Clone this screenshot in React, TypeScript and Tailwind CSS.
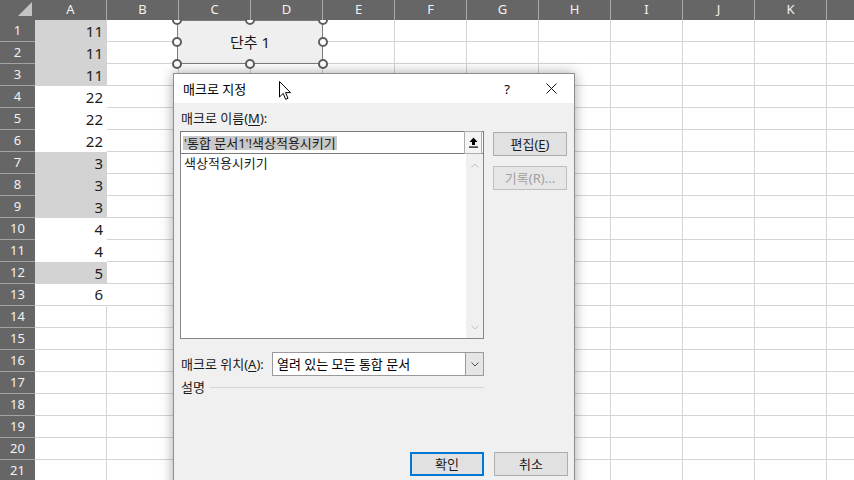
import React from "react";

const columns = ["A", "B", "C", "D", "E", "F", "G", "H", "I", "J", "K", "L"];
const values = [11, 11, 11, 22, 22, 22, 3, 3, 3, 4, 4, 5, 6];
const shaded = [1, 2, 3, 7, 8, 9, 12];
const rows = Array.from({ length: 21 }, (_, i) => i + 1);

function Sheet() {
  return (
    <div className="flex flex-col">
      <div className="relative z-20 flex h-[20px] bg-[#666666]">
        <div className="relative w-[35px] shrink-0">
          <svg className="absolute bottom-[3px] right-[2px]" width="16" height="15" viewBox="0 0 16 15">
            <polygon points="15,0 15,14 1,14" fill="#c4c4c4" />
          </svg>
        </div>
        {columns.map((col) => (
          <div
            key={col}
            className="flex w-[72px] shrink-0 items-center justify-center border-r border-[#a9a9a9] text-[13px] text-[#f2f2f2]"
          >
            {col === "L" ? "" : col}
          </div>
        ))}
      </div>

      {rows.map((row) => {
        const value = values[row - 1];
        const filled = row <= 13;
        const grey = shaded.includes(row);

        return (
          <div key={row} className="flex h-[22px]">
            <div className="flex w-[35px] shrink-0 items-center justify-center border-b border-[#a3a3a3] bg-[#666666] text-[13px] text-[#f2f2f2]">
              {row}
            </div>
            <div
              className={`flex w-[72px] shrink-0 items-center justify-end pr-[3px] text-[15px] text-[#1c1c1c] ${
                filled
                  ? grey
                    ? `bg-[#d3d3d3] border-r border-r-[#d3d3d3] ${row === 13 ? "border-b border-[#d4d4d4]" : ""}`
                    : `bg-white border-r border-r-white ${row === 13 ? "border-b border-[#d4d4d4]" : ""}`
                  : "border-b border-r border-[#d4d4d4]"
              }`}
            >
              {value ?? ""}
            </div>
            {columns.slice(1).map((col) => (
              <div key={col} className="w-[72px] shrink-0 border-b border-r border-[#d4d4d4]" />
            ))}
          </div>
        );
      })}
    </div>
  );
}

function Handle({ className }: { className: string }) {
  return <span className={`absolute h-[10px] w-[10px] rounded-full border-2 border-[#5e5e5e] bg-white ${className}`} />;
}

function ButtonShape() {
  return (
    <div className="absolute left-[177px] top-[20px] z-10 flex h-[44px] w-[146px] items-center justify-center border border-[#7d7d7d] bg-[#efefef] text-[15px] text-[#1a1a1a]">
      단추 1
      <Handle className="left-[-6px] top-[-6px]" />
      <Handle className="left-[calc(50%-5px)] top-[-6px]" />
      <Handle className="right-[-6px] top-[-6px]" />
      <Handle className="left-[-6px] top-[calc(50%-5px)]" />
      <Handle className="right-[-6px] top-[calc(50%-5px)]" />
      <Handle className="bottom-[-6px] left-[-6px]" />
      <Handle className="bottom-[-6px] left-[calc(50%-5px)]" />
      <Handle className="bottom-[-6px] right-[-6px]" />
    </div>
  );
}

function Chevron({ up, color }: { up?: boolean; color: string }) {
  return (
    <svg width="8" height="5" viewBox="0 0 8 5">
      <polyline
        points={up ? "0.5,4.5 4,1 7.5,4.5" : "0.5,0.5 4,4 7.5,0.5"}
        fill="none"
        stroke={color}
        strokeWidth="1"
      />
    </svg>
  );
}

function DialogButton({ label, primary, disabled }: { label: React.ReactNode; primary?: boolean; disabled?: boolean }) {
  return (
    <div
      className={`flex h-[24px] w-[74px] items-center justify-center bg-[#e1e1e1] ${
        primary ? "border-2 border-[#0078d7]" : disabled ? "border border-[#bfbfbf] bg-[#e6e6e6]" : "border border-[#adadad]"
      } ${disabled ? "text-[#a0a0a0]" : "text-[#1a1a1a]"}`}
    >
      {label}
    </div>
  );
}

function MacroDialog() {
  return (
    <div className="absolute left-[173px] top-[73px] z-30 h-[420px] w-[402px] border border-[#8e8e8e] bg-[#f0f0f0] text-[13px] leading-[16px] text-[#1a1a1a] shadow-[0_0_12px_rgba(0,0,0,0.35)]">
      <div className="flex h-[29px] items-center bg-white pl-[9px]">
        <span className="flex-1 text-black">매크로 지정</span>
        <span className="w-[30px] text-center text-[13px] text-black">?</span>
        <span className="ml-[6px] flex w-[46px] items-center justify-center">
          <svg width="11" height="11" viewBox="0 0 11 11">
            <path d="M0.5 0.5 L10.5 10.5 M10.5 0.5 L0.5 10.5" stroke="#111" strokeWidth="1" />
          </svg>
        </span>
      </div>

      <div className="px-[6px] pt-[7px]">
        <div className="h-[16px] pl-[1px]">
          매크로 이름(<span className="underline underline-offset-2">M</span>):
        </div>

        <div className="mt-[5px] flex gap-[9px]">
          <div className="flex w-[304px] flex-col">
            <div className="flex h-[23px] border border-[#7a7a7a] bg-white">
              <div className="flex flex-1 items-center pl-[2px]">
                <span className="inline-block bg-[#c9c9c9] px-[1px] leading-[14px]">'통합 문서1'!색상적용시키기</span>
              </div>
              <div className="my-[-1px] mr-[1px] flex w-[18px] items-center justify-center border border-[#adadad] bg-[#f4f4f4]">
                <svg width="9" height="11" viewBox="0 0 9 11">
                  <polygon points="4.5,0.5 8.5,5 0.5,5" fill="#000" />
                  <rect x="3" y="4.5" width="3" height="3.5" fill="#000" />
                  <rect x="0" y="9.5" width="9" height="1.2" fill="#000" />
                </svg>
              </div>
            </div>
            <div className="flex h-[185px] border-x border-b border-[#828790] bg-white">
              <div className="flex-1 pl-[3px] pt-[1px]">색상적용시키기</div>
              <div className="flex w-[17px] flex-col items-center justify-between bg-[#f0f0f0] pb-[8px] pt-[9px]">
                <Chevron up color="#c2c2c2" />
                <Chevron color="#c2c2c2" />
              </div>
            </div>
          </div>

          <div className="flex w-[74px] flex-col gap-[10px] pt-[1px]">
            <DialogButton
              label={
                <>
                  편집(<span className="underline underline-offset-2">E</span>)
                </>
              }
            />
            <DialogButton label="기록(R)..." disabled />
          </div>
        </div>

        <div className="mt-[13px] flex w-[304px] items-center">
          <div className="w-[92px] pl-[1px]">
            매크로 위치(<span className="underline underline-offset-2">A</span>):
          </div>
          <div className="flex h-[24px] flex-1 border border-[#9a9a9a] bg-white">
            <div className="flex flex-1 items-center pl-[4px] text-black">열려 있는 모든 통합 문서</div>
            <div className="flex w-[18px] items-center justify-center border-l border-[#9a9a9a] bg-[#e5e5e5]">
              <Chevron color="#505050" />
            </div>
          </div>
        </div>

        <div className="mt-[3px] flex h-[16px] w-[304px] items-center">
          <span className="pl-[1px]">설명</span>
          <span className="ml-[5px] h-px flex-1 bg-[#d7d7d7]" />
        </div>

        <div className="mt-[57px] flex justify-end gap-[10px]">
          <DialogButton label="확인" primary />
          <DialogButton label="취소" />
        </div>
      </div>
    </div>
  );
}

function Cursor() {
  return (
    <svg className="absolute left-[279px] top-[81px] z-40" width="13" height="20" viewBox="0 0 13 20">
      <path
        d="M0.5 0.5 L0.5 16 L4.2 12.4 L6.7 18.3 L9 17.3 L6.6 11.6 L11.5 11.6 Z"
        fill="#fff"
        stroke="#000"
        strokeWidth="1"
        strokeLinejoin="miter"
      />
    </svg>
  );
}

export default function App() {
  return (
    <div className="relative h-[480px] w-[854px] overflow-hidden bg-white font-['Noto_Sans','Noto_Sans_CJK_KR',sans-serif]">
      <Sheet />
      <ButtonShape />
      <MacroDialog />
      <Cursor />
    </div>
  );
}
